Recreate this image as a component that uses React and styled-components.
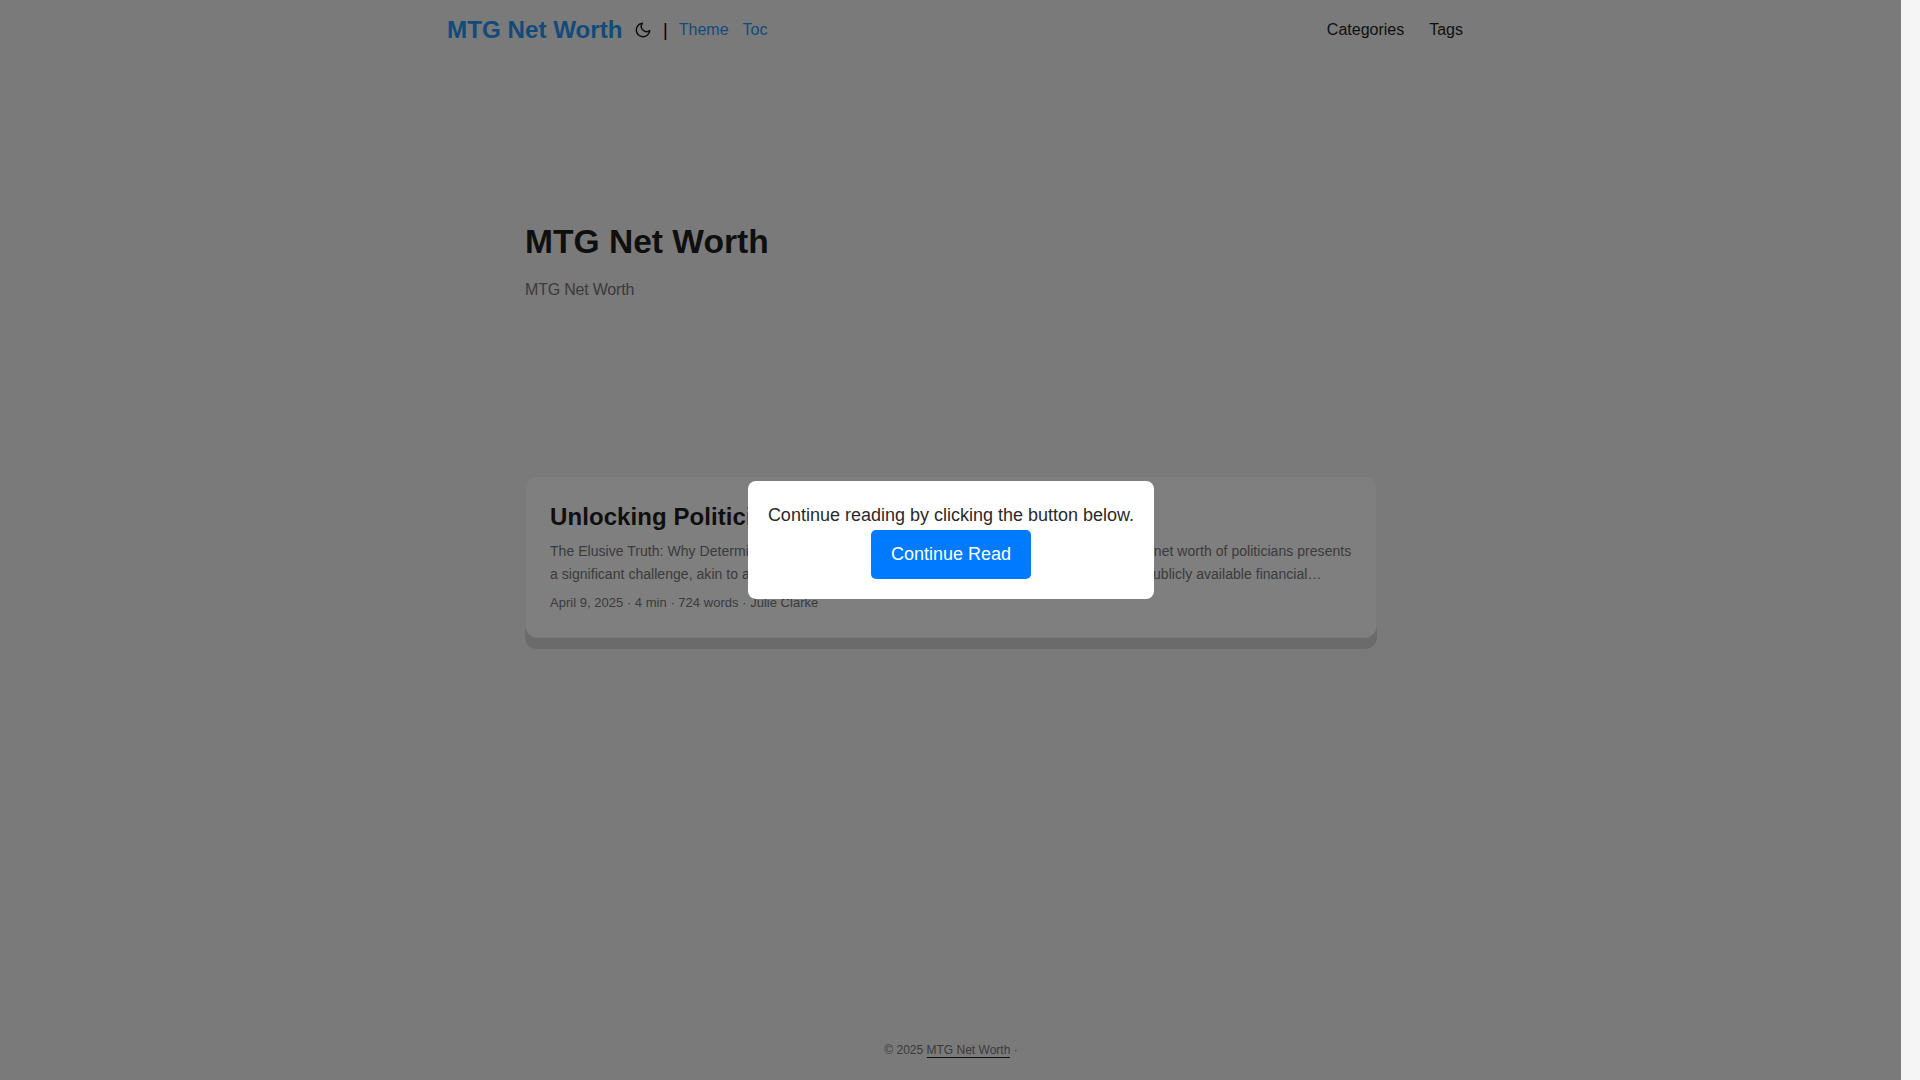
import React from "react";
import styled, { createGlobalStyle } from "styled-components";

const Global = createGlobalStyle`
  html { background: #f5f5f5; }
  *, *::before, *::after { box-sizing: border-box; }
  body {
    margin: 0;
    padding-right: 18px;
    background: #f5f5f5;
    color: #1e1e1e;
    font-family: "Liberation Sans", Arial, sans-serif;
    font-size: 16px;
    line-height: 1.6;
  }
`;

const Page = styled.div`
  min-height: 100vh;
  display: flex;
  flex-direction: column;
`;

const Header = styled.header`
  height: 60px;
  flex: none;
`;

const Nav = styled.nav`
  width: 100%;
  max-width: 1056px;
  height: 100%;
  margin: 0 auto;
  padding: 0 16px 0 24px;
  display: flex;
  align-items: center;
  justify-content: space-between;
`;

const LogoGroup = styled.div`
  display: flex;
  align-items: center;
`;

const Logo = styled.a`
  font-size: 24.2px;
  font-weight: 700;
  color: #2596f5;
  text-decoration: none;
`;

const ThemeToggle = styled.button`
  display: flex;
  margin: 0 0 0 11.5px;
  padding: 0;
  border: 0;
  background: none;
  color: #1e1e1e;
`;

const Sep = styled.span`
  margin: 0 11px;
  font-size: 18px;
  color: #000;
`;

const SwitchLink = styled.a`
  color: #2596f5;
  text-decoration: none;
  margin-right: 14px;
`;

const Menu = styled.ul`
  display: flex;
  gap: 25px;
  margin: 0;
  padding: 0;
  list-style: none;
`;

const MenuLink = styled.a`
  color: #1e1e1e;
  text-decoration: none;
`;

const Main = styled.main`
  flex: 1;
  width: 100%;
  max-width: 900px;
  margin: 0 auto;
  padding: 24px;
`;

const Intro = styled.section`
  min-height: 320px;
  margin: 24px 0 48px;
  padding-bottom: 12px;
  display: flex;
  flex-direction: column;
  justify-content: center;
`;

const IntroTitle = styled.h1`
  margin: 0 0 15px;
  font-size: 33.6px;
  line-height: 1.2;
  font-weight: 700;
`;

const IntroText = styled.p`
  margin: 0;
  font-size: 16px;
  letter-spacing: -0.2px;
  color: #767676;
`;

const Card = styled.article`
  padding: 24px 24px 23px;
  background: #fff;
  border: 1px solid #f5f5f5;
  border-radius: 12px;
  box-shadow: 0 11px 0 #d6d6d6;
`;

const CardTitle = styled.h2`
  margin: 0 0 8px;
  font-size: 24px;
  line-height: 1.3;
  letter-spacing: 0.08px;
  font-weight: 700;
`;

const Excerpt = styled.p`
  margin: 0 0 5px;
  font-size: 14px;
  line-height: 23px;
  letter-spacing: 0.04px;
  color: #767676;
`;

const Meta = styled.footer`
  font-size: 13px;
  line-height: 23px;
  letter-spacing: 0.02px;
  color: #767676;
`;

const Footer = styled.footer`
  height: 60px;
  flex: none;
  padding-top: 20px;
  text-align: center;
  font-size: 12px;
  line-height: 20px;
  color: #767676;
`;

const FooterLink = styled.a`
  color: inherit;
  text-decoration: none;
  border-bottom: 1px solid #1e1e1e;
`;

const Overlay = styled.div`
  position: fixed;
  inset: 0 19px 0 0;
  padding-left: 1px;
  display: flex;
  align-items: center;
  justify-content: center;
  background: rgba(0, 0, 0, 0.5);
`;

const Modal = styled.div`
  padding: 20px;
  background: #fff;
  border-radius: 8px;
  text-align: center;
  font-size: 18px;
  color: #2a2a2a;
`;

const ModalText = styled.div`
  line-height: 29px;
`;

const ContinueButton = styled.button`
  display: block;
  margin: 0 auto;
  padding: 14px 20px;
  border: 0;
  border-radius: 5px;
  background: #007bff;
  color: #fff;
  font-family: inherit;
  font-size: 18px;
  line-height: 21px;
`;

const MoonIcon = () => (
  <svg width="18" height="18" viewBox="0 0 24 24" fill="none" stroke="currentColor" strokeWidth="2" strokeLinecap="round" strokeLinejoin="round">
    <path d="M21 12.79A9 9 0 1 1 11.21 3 7 7 0 0 0 21 12.79z" />
  </svg>
);

export default function App() {
  return (
    <>
      <Global />
      <Page>
        <Header>
          <Nav>
            <LogoGroup>
              <Logo href="#">MTG Net Worth</Logo>
              <ThemeToggle aria-label="Toggle theme"><MoonIcon /></ThemeToggle>
              <Sep>|</Sep>
              <SwitchLink href="#">Theme</SwitchLink>
              <SwitchLink href="#">Toc</SwitchLink>
            </LogoGroup>
            <Menu>
              <li><MenuLink href="#">Categories</MenuLink></li>
              <li><MenuLink href="#">Tags</MenuLink></li>
            </Menu>
          </Nav>
        </Header>
        <Main>
          <Intro>
            <IntroTitle>MTG Net Worth</IntroTitle>
            <IntroText>MTG Net Worth</IntroText>
          </Intro>
          <Card>
            <CardTitle>Unlocking Politician Net Worth: A Closer Look</CardTitle>
            <Excerpt>
              The Elusive Truth: Why Determining any Politician's Real Wealth Is Just So Hard. Estimating the net worth of politicians presents
              <br />
              a significant challenge, akin to assembling a puzzle with many absent pieces, even when given publicly available financial…
            </Excerpt>
            <Meta>April 9, 2025 · 4 min · 724 words · Julie Clarke</Meta>
          </Card>
        </Main>
        <Footer>
          © 2025 <FooterLink href="#">MTG Net Worth</FooterLink> ·
        </Footer>
      </Page>
      <Overlay>
        <Modal>
          <ModalText>Continue reading by clicking the button below.</ModalText>
          <ContinueButton>Continue Read</ContinueButton>
        </Modal>
      </Overlay>
    </>
  );
}
